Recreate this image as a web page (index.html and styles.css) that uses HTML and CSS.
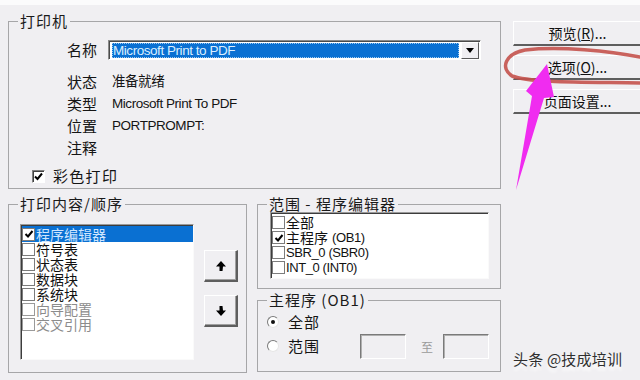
FILE: index.html
```html
<!DOCTYPE html>
<html lang="zh-CN">
<head>
<meta charset="utf-8">
<title>打印</title>
<link rel="stylesheet" href="styles.css">
</head>
<body>
<div class="dialog">
  <div class="main">
    <fieldset class="group printer">
      <legend>打印机</legend>
      <div class="info">
        <span class="lbl">名称</span>
        <div class="combo">
          <span class="combo-field"><span class="combo-sel">Microsoft Print to PDF</span></span>
          <span class="combo-btn"><svg width="8" height="5" viewBox="0 0 8 5"><polygon points="0,0 8,0 4,5" fill="#000"/></svg></span>
        </div>
        <span class="lbl">状态</span><span class="val">准备就绪</span>
        <span class="lbl">类型</span><span class="val">Microsoft Print To PDF</span>
        <span class="lbl">位置</span><span class="val">PORTPROMPT:</span>
        <span class="lbl">注释</span><span class="val"></span>
      </div>
      <div class="color-check">
        <span class="chk"><svg width="9" height="9" viewBox="0 0 9 9"><path d="M1 4.5 L3.5 7 L8 1.5" fill="none" stroke="#000" stroke-width="2"/></svg></span>
        <span class="chk-label">彩色打印</span>
      </div>
    </fieldset>

    <div class="lower">
      <fieldset class="group content">
        <legend>打印内容/顺序</legend>
        <div class="content-body">
          <ul class="listbox items">
            <li class="selected"><span class="cb on"><svg width="10" height="10" viewBox="0 0 10 10"><path d="M1.5 5 L4 7.5 L8.5 2" fill="none" stroke="#000" stroke-width="2"/></svg></span>程序编辑器</li>
            <li><span class="cb"></span>符号表</li>
            <li><span class="cb"></span>状态表</li>
            <li><span class="cb"></span>数据块</li>
            <li><span class="cb"></span>系统块</li>
            <li class="disabled"><span class="cb"></span>向导配置</li>
            <li class="disabled"><span class="cb"></span>交叉引用</li>
          </ul>
          <div class="order-btns">
            <button class="btn order"><svg width="12" height="12" viewBox="0 0 12 12"><path d="M6 1 L11 6.5 L8 6.5 L7.5 11 L4.5 11 L4.5 6.5 L1 6.5 Z" fill="#000"/></svg></button>
            <button class="btn order"><svg width="12" height="12" viewBox="0 0 12 12"><path d="M6 11 L11 5.5 L8 5.5 L7.5 1 L4.5 1 L4.5 5.5 L1 5.5 Z" fill="#000"/></svg></button>
          </div>
        </div>
      </fieldset>

      <div class="lower-right">
        <fieldset class="group range">
          <legend>范围 - 程序编辑器</legend>
          <div class="range-body">
            <ul class="listbox ranges">
              <li><span class="cb"></span>全部</li>
              <li><span class="cb on"><svg width="10" height="10" viewBox="0 0 10 10"><path d="M1.5 5 L4 7.5 L8.5 2" fill="none" stroke="#000" stroke-width="2"/></svg></span>主程序<span class="lat gap">(OB1)</span></li>
              <li><span class="cb"></span><span class="lat">SBR_0 (SBR0)</span></li>
              <li><span class="cb"></span><span class="lat">INT_0 (INT0)</span></li>
            </ul>
          </div>
        </fieldset>

        <fieldset class="group mainprog">
          <legend>主程序 (OB1)</legend>
          <div class="mainprog-body">
            <div class="radio-row first">
              <span class="radio on"></span><span class="radio-label">全部</span>
            </div>
            <div class="radio-row">
              <span class="radio"></span><span class="radio-label">范围</span>
              <span class="field from"></span>
              <span class="to">至</span>
              <span class="field"></span>
            </div>
          </div>
        </fieldset>
      </div>
    </div>
  </div>

  <div class="side-btns">
    <button class="btn side">预览(<u>R</u>)...</button>
    <button class="btn side">选项(<u>O</u>)...</button>
    <button class="btn side">页面设置...</button>
  </div>
</div>

<svg class="annot" width="640" height="380" viewBox="0 0 640 380">
  <path d="M640 57 C610 51 560 46 525 50 C505 54 500 68 512 76 C530 83 590 82 640 83" fill="none" stroke="#c4524c" stroke-width="3.5" stroke-opacity="0.9" stroke-linecap="round"/>
  <polygon points="547,64 554,97 544,98 516,190 532,96 526,91" fill="#f02cf0"/>
</svg>
<div class="watermark">头条 @技成培训</div>
</body>
</html>
```

FILE: styles.css
```css
* { box-sizing: border-box; }

html, body { margin: 0; padding: 0; }

body {
  width: 640px;
  height: 380px;
  overflow: hidden;
  position: relative;
  background: #f0eff2;
  border-top: 5px solid #fbfbfc;
  font-family: "Liberation Sans", "Noto Sans CJK SC", sans-serif;
  color: #141414;
}

.dialog {
  display: flex;
  gap: 12px;
  padding: 8px 0 0 8px;
}

.main {
  width: 493px;
  flex: none;
  display: flex;
  flex-direction: column;
  gap: 7px;
}

/* group boxes */
.group {
  margin: 0;
  padding: 0;
  min-width: 0;
  border: 1px solid #a6a6a8;
}

.group legend {
  margin-left: 9px;
  padding: 0 2px;
  font-family: "Noto Sans CJK SC", sans-serif;
  font-size: 15px;
  line-height: 16px;
  letter-spacing: 1px;
  color: #1a1a1a;
}

/* printer */
.info {
  display: grid;
  grid-template-columns: 41px 373px;
  grid-template-rows: 31px repeat(4, 22px);
  margin: 11px 0 0 58px;
  align-items: center;
}

.lbl {
  font-family: "Noto Sans CJK SC", sans-serif;
  font-size: 15px;
  line-height: 22px;
}

.info > .lbl:first-child {
  align-self: start;
  line-height: 20px;
}

.val {
  padding-left: 4px;
  font-size: 13.5px;
  letter-spacing: -0.45px;
  line-height: 22px;
}

.val:first-of-type { letter-spacing: 0; }

.combo {
  align-self: start;
  height: 20px;
  display: flex;
  align-items: center;
  background: #fff;
  border-style: solid;
  border-width: 1px;
  border-color: #8a8a8a #fff #fff #8a8a8a;
  box-shadow: inset 1px 1px 0 #4a4a4a;
  padding: 1px 1px 1px 3px;
}

.combo-field {
  flex: 1;
  height: 15px;
  background: #0a70d2;
  outline: 1px dotted #9cc9f0;
  outline-offset: -1px;
  display: flex;
  align-items: center;
}

.combo-sel {
  color: #d9eeff;
  font-size: 13.5px;
  letter-spacing: -0.45px;
  padding-left: 1px;
}

.combo-btn {
  width: 18px;
  height: 17px;
  margin-left: 2px;
  display: flex;
  align-items: center;
  justify-content: center;
  background: #f0eff2;
  border-style: solid;
  border-width: 1px;
  border-color: #fff #5a5a5a #5a5a5a #fff;
}

.color-check {
  display: flex;
  align-items: center;
  height: 16px;
  margin: 9px 0 4px 23px;
}

.chk {
  width: 13px;
  height: 13px;
  display: flex;
  align-items: center;
  justify-content: center;
  background: #fff;
  border-style: solid;
  border-width: 1px;
  border-color: #808080 #fff #fff #808080;
  box-shadow: inset 1px 1px 0 #404040;
}

.chk-label {
  margin-left: 8px;
  font-family: "Noto Sans CJK SC", sans-serif;
  font-size: 15px;
  letter-spacing: 1.3px;
  line-height: 16px;
}

/* lower */
.lower {
  display: flex;
  gap: 10px;
}

.content { width: 239px; flex: none; }

.content-body {
  display: flex;
  gap: 10px;
  padding: 12px 0 12px 11px;
}

.listbox {
  list-style: none;
  margin: 0;
  background: #fff;
  border-style: solid;
  border-width: 1px;
  border-color: #9a9a9a #fafafa #fafafa #9a9a9a;
  box-shadow: inset 1px 1px 0 #3c3c3c;
  padding: 1px 0 0 1px;
}

.listbox li {
  display: flex;
  align-items: center;
  height: 15px;
  font-family: "Noto Sans CJK SC", sans-serif;
  font-size: 14px;
  line-height: 15px;
  color: #111;
  white-space: nowrap;
}

.items {
  width: 174px;
  height: 136px;
}

.items li.selected {
  background: #0a70d2;
  color: #cfe6ff;
  height: 16px;
}

.items li.disabled { color: #8c8c8c; }

.cb {
  width: 13px;
  height: 13px;
  flex: none;
  margin-right: 1px;
  display: flex;
  align-items: center;
  justify-content: center;
  background: #fff;
  border: 1px solid #7c7c7c;
}

.disabled .cb { border-color: #9a9a9a; }

.lat {
  font-family: "Liberation Sans", sans-serif;
  font-size: 13px;
  letter-spacing: -0.4px;
}

.lat.gap { margin-left: 4px; }

.order-btns {
  display: flex;
  flex-direction: column;
  gap: 13px;
  margin-top: 26px;
}

.btn {
  margin: 0;
  padding: 0;
  background: #f0eff2;
  border-style: solid;
  border-color: #fff #5e5e5e #5e5e5e #fff;
  font-family: "Noto Sans CJK SC", sans-serif;
  color: #111;
}

.order {
  width: 34px;
  height: 32px;
  border-width: 1px 2px 2px 1px;
  box-shadow: inset -1px -1px 0 #a0a0a0;
  display: flex;
  align-items: center;
  justify-content: center;
}

.lower-right {
  width: 244px;
  flex: none;
  display: flex;
  flex-direction: column;
  gap: 3px;
}

.range-body { padding: 0 12px 9px 12px; }

.ranges {
  width: 219px;
  height: 67px;
  padding-top: 2px;
}

.mainprog-body {
  padding: 4px 8px 12px 9px;
  display: flex;
  flex-direction: column;
  gap: 1px;
}

.radio-row {
  display: flex;
  align-items: center;
  height: 26px;
}

.radio-row.first { height: 20px; }

.radio {
  width: 12px;
  height: 12px;
  flex: none;
  border-radius: 50%;
  background: #fff;
  border: 1px solid;
  border-color: #7a7a7a #e6e6e6 #e6e6e6 #7a7a7a;
  display: flex;
  align-items: center;
  justify-content: center;
}

.radio.on::after {
  content: "";
  width: 4px;
  height: 4px;
  border-radius: 50%;
  background: #111;
}

.radio-label {
  flex: none;
  white-space: nowrap;
  margin-left: 9px;
  font-family: "Noto Sans CJK SC", sans-serif;
  font-size: 15px;
  letter-spacing: 1px;
  line-height: 20px;
}

.field {
  width: 46px;
  height: 25px;
  flex: none;
  border-style: solid;
  border-width: 1px;
  border-color: #7a7a7a #fff #fff #7a7a7a;
  box-shadow: inset 1px 1px 0 #b0b0b0;
}

.field.from { margin-left: 40px; }

.to {
  flex: none;
  margin: 0 10px 0 15px;
  font-family: "Noto Sans CJK SC", sans-serif;
  font-size: 12px;
  color: #9a9a9a;
}

/* side buttons */
.side-btns {
  display: flex;
  flex-direction: column;
  gap: 9px;
  padding-top: 8px;
}

.side {
  width: 130px;
  height: 25px;
  flex: none;
  border-width: 1px 0 2px 1px;
  border-color: #fff #5e5e5e #5e5e5e #fff;
  font-size: 14px;
  line-height: 20px;
  padding-right: 2px;
}

.side u { text-underline-offset: 1px; }

/* overlays */
.annot {
  position: absolute;
  left: 0;
  top: -5px;
  pointer-events: none;
}

.watermark {
  position: absolute;
  left: 513px;
  top: 345px;
  font-family: "Noto Sans CJK SC", sans-serif;
  font-size: 15px;
  line-height: 18px;
  color: #2f2f2f;
  text-shadow: 0 4px 3px #fff;
  letter-spacing: 0.2px;
}
```
